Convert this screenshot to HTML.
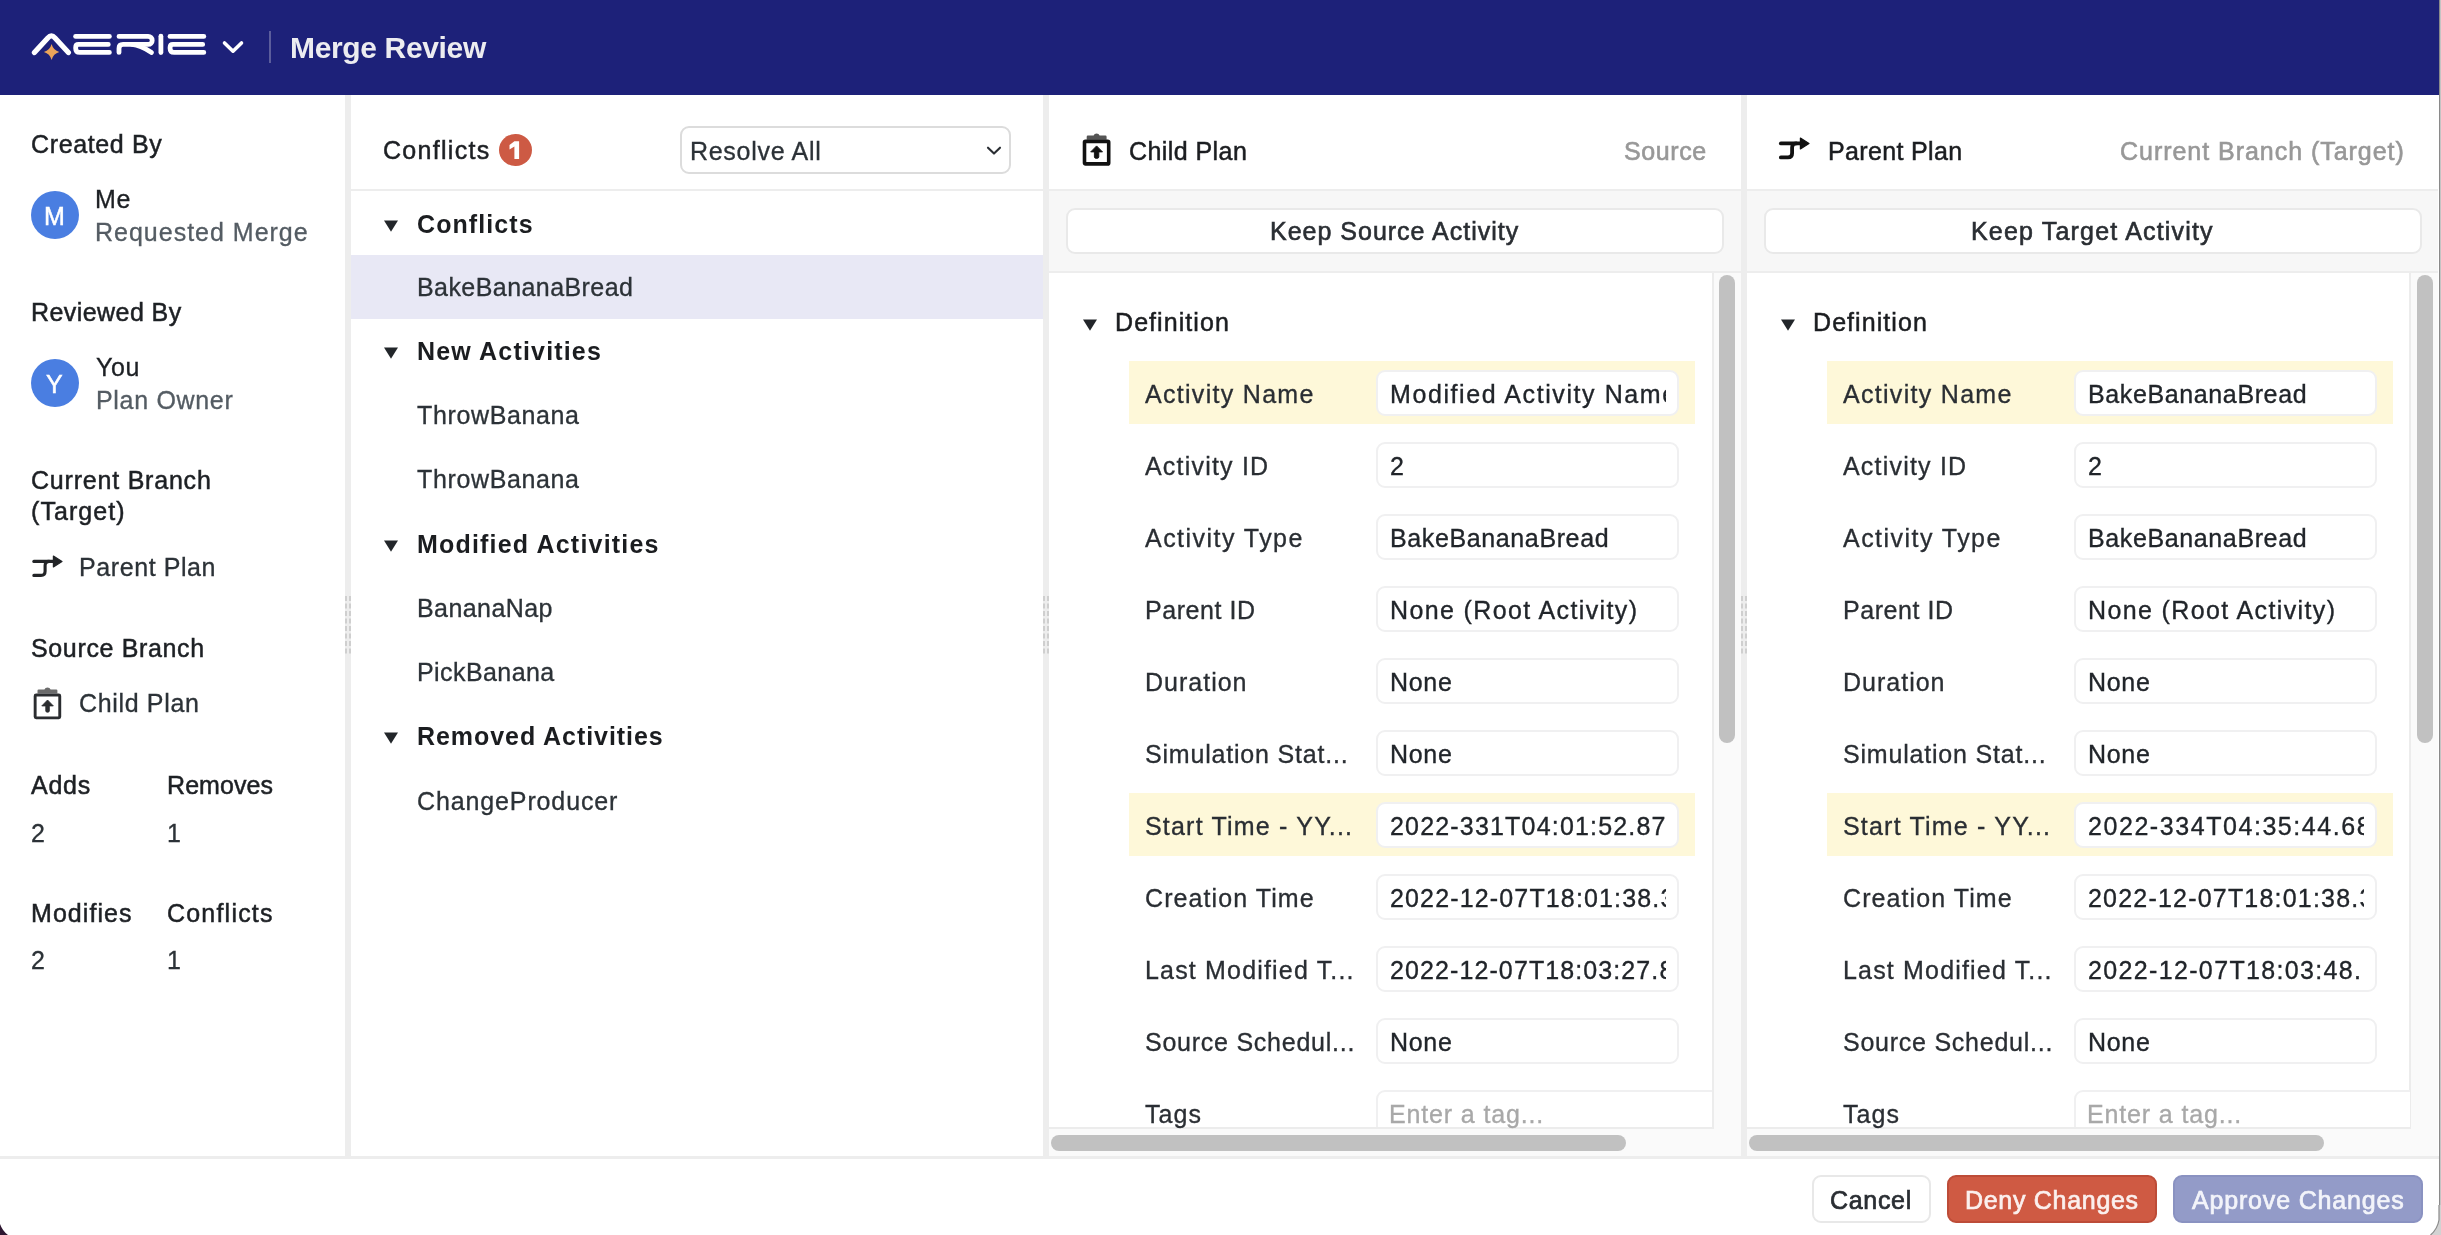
<!DOCTYPE html>
<html><head><meta charset="utf-8"><title>Merge Review</title>
<style>
*{box-sizing:border-box;margin:0;padding:0}
html,body{width:2441px;height:1235px;overflow:hidden;background:#fff;font-family:"Liberation Sans",sans-serif}
.t{position:absolute;white-space:nowrap;will-change:transform}
.b{position:absolute}
</style></head><body>
<div class="b" style="left:0px;top:0px;width:2441px;height:95px;background:#1d2179"></div>
<svg class="b" style="left:0;top:0" width="300" height="95" viewBox="0 0 300 95">
<g fill="none" stroke="#fff" stroke-width="4.8" stroke-linecap="round" stroke-linejoin="round">
<path d="M34.4 52.6 L47.8 37.9 Q51.4 34 55 37.9 L68.4 52.6" stroke-width="5.2"/>
<path d="M75.6 36.4 H109.4"/>
<path d="M108.3 44.4 H78.5 Q75.7 44.4 75.7 47.2 V48.4 Q75.7 52.4 79.7 52.4 H109.4"/>
<path d="M119 36.4 H148.2 A4 4 0 0 1 148.2 44.4 H123 Q119 44.4 119 48.4 V52.4"/>
<path d="M132 44.4 Q140 45 151.5 52.4"/>
<path d="M160.9 36.2 V52.6"/>
<path d="M170 36.4 H203.8"/>
<path d="M202.7 44.4 H172.9 Q170.1 44.4 170.1 47.2 V48.4 Q170.1 52.4 174.1 52.4 H203.8"/>
<path d="M224.5 43 L233 51.2 L241.5 43" stroke-width="3.6"/>
</g>
<path d="M51.6 43.9 Q53.3 50.2 59.3 51.9 Q53.3 53.6 51.6 59.9 Q49.9 53.6 43.9 51.9 Q49.9 50.2 51.6 43.9Z" fill="#eba45a"/>
<rect x="269" y="31" width="2" height="32" fill="#5b5d9c"/>
</svg>
<div class="t" style="left:290.10px;top:32.65px;font-size:30px;line-height:30px;color:#ececf0;letter-spacing:-0.350px;font-weight:bold;">Merge Review</div>
<div class="b" style="left:345px;top:95px;width:6px;height:1062px;background:#ededed"></div>
<div class="b" style="left:1043px;top:95px;width:6px;height:1062px;background:#ededed"></div>
<div class="b" style="left:1741px;top:95px;width:6px;height:1062px;background:#ededed"></div>
<div class="b" style="left:0px;top:1156px;width:2441px;height:3px;background:#ededed"></div>
<div class="t" style="left:31.10px;top:131.74px;font-size:25px;line-height:25px;color:#1d2024;letter-spacing:0.631px;-webkit-text-stroke:0.5px #1d2024;">Created By</div>
<div class="b" style="left:31px;top:191px;width:48px;height:48px;background:#4a7ee1;border-radius:50%"></div>
<div class="t" style="left:44.30px;top:203.54px;font-size:25px;line-height:25px;color:#fff;letter-spacing:-2.475px;-webkit-text-stroke:0.5px #fff;">M</div>
<div class="t" style="left:95.20px;top:187.34px;font-size:25px;line-height:25px;color:#1d2024;letter-spacing:0.600px;-webkit-text-stroke:0.32px #1d2024;">Me</div>
<div class="t" style="left:95.20px;top:220.44px;font-size:25px;line-height:25px;color:#545c63;letter-spacing:0.996px;-webkit-text-stroke:0.32px #545c63;">Requested Merge</div>
<div class="t" style="left:31.10px;top:300.14px;font-size:25px;line-height:25px;color:#1d2024;letter-spacing:0.432px;-webkit-text-stroke:0.5px #1d2024;">Reviewed By</div>
<div class="b" style="left:31px;top:359px;width:48px;height:48px;background:#4a7ee1;border-radius:50%"></div>
<div class="t" style="left:45.50px;top:371.54px;font-size:25px;line-height:25px;color:#fff;letter-spacing:0.600px;-webkit-text-stroke:0.5px #fff;">Y</div>
<div class="t" style="left:95.50px;top:354.74px;font-size:25px;line-height:25px;color:#1d2024;letter-spacing:0.600px;-webkit-text-stroke:0.32px #1d2024;">You</div>
<div class="t" style="left:95.50px;top:387.64px;font-size:25px;line-height:25px;color:#545c63;letter-spacing:0.686px;-webkit-text-stroke:0.32px #545c63;">Plan Owner</div>
<div class="t" style="left:31.10px;top:468.24px;font-size:25px;line-height:25px;color:#1d2024;letter-spacing:0.792px;-webkit-text-stroke:0.5px #1d2024;">Current Branch</div>
<div class="t" style="left:31.10px;top:499.34px;font-size:25px;line-height:25px;color:#1d2024;letter-spacing:1.068px;-webkit-text-stroke:0.5px #1d2024;">(Target)</div>
<svg class="b" style="left:30.5px;top:554.5px" width="34" height="24" viewBox="0 0 34 24">
<path d="M2.85 6.4 H23" stroke="#222427" stroke-width="3.1" stroke-linecap="round" fill="none"/>
<path d="M2.85 20.4 H10 Q14.1 20.4 14.1 16.3 V10.5 Q14.1 6.4 18.2 6.4" stroke="#222427" stroke-width="3.1" stroke-linecap="round" fill="none"/>
<path d="M22.4 1 L31 6.4 L22.4 11.9 Z" fill="#222427" stroke="#222427" stroke-width="1.2" stroke-linejoin="round"/>
</svg>
<div class="t" style="left:79.30px;top:555.24px;font-size:25px;line-height:25px;color:#2c3237;letter-spacing:0.588px;-webkit-text-stroke:0.32px #2c3237;">Parent Plan</div>
<div class="t" style="left:31.30px;top:635.94px;font-size:25px;line-height:25px;color:#1d2024;letter-spacing:0.644px;-webkit-text-stroke:0.5px #1d2024;">Source Branch</div>
<svg class="b" style="left:31.5px;top:686.5px" width="30" height="34" viewBox="0 0 30 34">
<path d="M5.5 6.6 V3.6 Q5.5 2.4 6.7 2.4 H12.4 Q13.2 0.4 15.5 0.4 Q17.8 0.4 18.6 2.4 H24.2 Q25.4 2.4 25.4 3.6 V6.6 Z" fill="#6b6b6b"/>
<rect x="3.15" y="8.05" width="24.6" height="22.8" rx="1" fill="none" stroke="#2b2d30" stroke-width="2.9"/>
<path d="M15.55 13 L21.3 18.9 H17.3 V24 Q17.3 25.2 15.55 25.2 Q13.8 25.2 13.8 24 V18.9 H9.8 Z" fill="#2b2d30" stroke="#2b2d30" stroke-width="0.9" stroke-linejoin="round"/>
</svg>
<div class="t" style="left:79.00px;top:691.34px;font-size:25px;line-height:25px;color:#2c3237;letter-spacing:0.656px;-webkit-text-stroke:0.32px #2c3237;">Child Plan</div>
<div class="t" style="left:31.30px;top:773.24px;font-size:25px;line-height:25px;color:#1d2024;letter-spacing:0.767px;-webkit-text-stroke:0.5px #1d2024;">Adds</div>
<div class="t" style="left:166.60px;top:773.24px;font-size:25px;line-height:25px;color:#1d2024;letter-spacing:0.079px;-webkit-text-stroke:0.5px #1d2024;">Removes</div>
<div class="t" style="left:31.30px;top:821.14px;font-size:25px;line-height:25px;color:#2c3237;letter-spacing:0.600px;-webkit-text-stroke:0.32px #2c3237;">2</div>
<div class="t" style="left:166.60px;top:821.14px;font-size:25px;line-height:25px;color:#2c3237;letter-spacing:0.600px;-webkit-text-stroke:0.32px #2c3237;">1</div>
<div class="t" style="left:31.30px;top:901.34px;font-size:25px;line-height:25px;color:#1d2024;letter-spacing:1.054px;-webkit-text-stroke:0.5px #1d2024;">Modifies</div>
<div class="t" style="left:166.60px;top:901.34px;font-size:25px;line-height:25px;color:#1d2024;letter-spacing:1.203px;-webkit-text-stroke:0.5px #1d2024;">Conflicts</div>
<div class="t" style="left:31.30px;top:948.14px;font-size:25px;line-height:25px;color:#2c3237;letter-spacing:0.600px;-webkit-text-stroke:0.32px #2c3237;">2</div>
<div class="t" style="left:166.60px;top:948.14px;font-size:25px;line-height:25px;color:#2c3237;letter-spacing:0.600px;-webkit-text-stroke:0.32px #2c3237;">1</div>
<div class="t" style="left:382.80px;top:138.34px;font-size:25px;line-height:25px;color:#1d2024;letter-spacing:1.291px;-webkit-text-stroke:0.5px #1d2024;">Conflicts</div>
<div class="b" style="left:499px;top:134px;width:32.5px;height:32px;background:#cd5a44;border-radius:50%"></div>
<svg class="b" style="left:499px;top:134px" width="33" height="32" viewBox="0 0 33 32"><path d="M15.4 7.3 H20.1 V25 H15.4 V12.6 L10.5 15.4 V11 Z" fill="#fff"/></svg>
<div class="b" style="left:680px;top:126px;width:331px;height:48px;border:2px solid #dcdcdc;border-radius:9px;background:#fff"></div>
<div class="t" style="left:690.20px;top:138.94px;font-size:25px;line-height:25px;color:#2c3237;letter-spacing:0.707px;-webkit-text-stroke:0.32px #2c3237;">Resolve All</div>
<svg class="b" style="left:984px;top:143px" width="20" height="14" viewBox="0 0 20 14"><path d="M4 4.7 L10 10.6 L16 4.7" fill="none" stroke="#2a2e33" stroke-width="2.1" stroke-linecap="round" stroke-linejoin="round"/></svg>
<div class="b" style="left:351px;top:189px;width:692px;height:2px;background:#ededed"></div>
<div class="b" style="left:351px;top:255px;width:692px;height:64px;background:#e8e8f5"></div>
<svg class="b" style="left:383px;top:218.6px" width="16" height="14" viewBox="0 0 16 14"><path d="M1 1.5 H15 L8 12.8 Z" fill="#22262a"/></svg>
<div class="t" style="left:416.60px;top:211.64px;font-size:25px;line-height:25px;color:#1b1d20;letter-spacing:1.088px;font-weight:bold;">Conflicts</div>
<div class="t" style="left:416.60px;top:275.34px;font-size:25px;line-height:25px;color:#2c3237;letter-spacing:0.430px;-webkit-text-stroke:0.32px #2c3237;">BakeBananaBread</div>
<svg class="b" style="left:383px;top:346.3px" width="16" height="14" viewBox="0 0 16 14"><path d="M1 1.5 H15 L8 12.8 Z" fill="#22262a"/></svg>
<div class="t" style="left:416.60px;top:339.34px;font-size:25px;line-height:25px;color:#1b1d20;letter-spacing:1.175px;font-weight:bold;">New Activities</div>
<div class="t" style="left:416.60px;top:403.04px;font-size:25px;line-height:25px;color:#2c3237;letter-spacing:0.635px;-webkit-text-stroke:0.32px #2c3237;">ThrowBanana</div>
<div class="t" style="left:416.60px;top:467.04px;font-size:25px;line-height:25px;color:#2c3237;letter-spacing:0.635px;-webkit-text-stroke:0.32px #2c3237;">ThrowBanana</div>
<svg class="b" style="left:383px;top:539.2px" width="16" height="14" viewBox="0 0 16 14"><path d="M1 1.5 H15 L8 12.8 Z" fill="#22262a"/></svg>
<div class="t" style="left:416.60px;top:532.24px;font-size:25px;line-height:25px;color:#1b1d20;letter-spacing:1.194px;font-weight:bold;">Modified Activities</div>
<div class="t" style="left:416.60px;top:596.44px;font-size:25px;line-height:25px;color:#2c3237;letter-spacing:0.425px;-webkit-text-stroke:0.32px #2c3237;">BananaNap</div>
<div class="t" style="left:416.60px;top:660.04px;font-size:25px;line-height:25px;color:#2c3237;letter-spacing:0.422px;-webkit-text-stroke:0.32px #2c3237;">PickBanana</div>
<svg class="b" style="left:383px;top:731.1px" width="16" height="14" viewBox="0 0 16 14"><path d="M1 1.5 H15 L8 12.8 Z" fill="#22262a"/></svg>
<div class="t" style="left:416.60px;top:724.14px;font-size:25px;line-height:25px;color:#1b1d20;letter-spacing:0.944px;font-weight:bold;">Removed Activities</div>
<div class="t" style="left:416.60px;top:788.84px;font-size:25px;line-height:25px;color:#2c3237;letter-spacing:0.877px;-webkit-text-stroke:0.32px #2c3237;">ChangeProducer</div>
<svg class="b" style="left:1081.4px;top:133.2px" width="32" height="34" viewBox="0 0 32 34">
<path d="M5.7 6.8 V3.8 Q5.7 2.6 6.9 2.6 H12.6 Q13.4 0.6 15.6 0.6 Q17.8 0.6 18.6 2.6 H24.4 Q25.6 2.6 25.6 3.8 V6.8 Z" fill="#555"/>
<rect x="3.5" y="8.4" width="24.2" height="22.5" rx="1" fill="none" stroke="#111" stroke-width="3.6"/>
<path d="M15.6 12.9 L21.5 18.9 H17.8 V24 Q17.8 25.4 15.6 25.4 Q13.4 25.4 13.4 24 V18.9 H9.7 Z" fill="#111" stroke="#111" stroke-width="0.9" stroke-linejoin="round"/>
</svg>
<div class="t" style="left:1128.90px;top:138.74px;font-size:25px;line-height:25px;color:#1b1d20;letter-spacing:0.433px;-webkit-text-stroke:0.5px #1b1d20;">Child Plan</div>
<div class="t" style="left:1624.00px;top:138.94px;font-size:25px;line-height:25px;color:#989898;letter-spacing:0.610px;-webkit-text-stroke:0.6px #989898;">Source</div>
<div class="b" style="left:1049px;top:189px;width:692px;height:2px;background:#ededed"></div>
<div class="b" style="left:1049px;top:191px;width:692px;height:80px;background:#f7f7f7"></div>
<div class="b" style="left:1049px;top:271px;width:692px;height:2px;background:#ededed"></div>
<div class="b" style="left:1066px;top:208px;width:658px;height:46px;background:#fff;border:2px solid #e9e9e9;border-radius:9px"></div>
<div class="t" style="left:1269.70px;top:219.14px;font-size:25px;line-height:25px;color:#2a2e33;letter-spacing:0.997px;-webkit-text-stroke:0.6px #2a2e33;">Keep Source Activity</div>
<div class="b" style="left:1711.5px;top:273px;width:29.5px;height:856px;background:#fafafa;border-left:2px solid #ececec"></div>
<div class="b" style="left:1719px;top:275px;width:16px;height:467.5px;background:#c1c1c1;border-radius:8px"></div>
<div class="b" style="left:1049px;top:1127px;width:663px;height:2px;background:#ececec"></div>
<div class="b" style="left:1049px;top:1129px;width:692px;height:27px;background:#fafafa"></div>
<div class="b" style="left:1051px;top:1135px;width:574.5px;height:16px;background:#c1c1c1;border-radius:8px"></div>
<svg class="b" style="left:1081.5px;top:317.5px" width="16" height="14" viewBox="0 0 16 14"><path d="M1 1.5 H15 L8 12.8 Z" fill="#22262a"/></svg>
<div class="t" style="left:1115.10px;top:310.34px;font-size:25px;line-height:25px;color:#1b1d20;letter-spacing:1.072px;-webkit-text-stroke:0.5px #1b1d20;">Definition</div>
<div class="b" style="left:1129px;top:361px;width:566px;height:63px;background:#fef8d9"></div>
<div class="b" style="left:1129px;top:793px;width:566px;height:63px;background:#fef8d9"></div>
<div class="b" style="left:1049px;top:273px;width:663px;height:854px;overflow:hidden">
<div class="b" style="left:326.5px;top:96.69999999999999px;width:303px;height:46.6px;background:#fff;border:2px solid #f0f0f1;border-radius:9px;overflow:hidden"></div>
<div class="b" style="left:326.5px;top:168.7px;width:303px;height:46.6px;background:#fff;border:2px solid #f0f0f1;border-radius:9px;overflow:hidden"></div>
<div class="b" style="left:326.5px;top:240.70000000000005px;width:303px;height:46.6px;background:#fff;border:2px solid #f0f0f1;border-radius:9px;overflow:hidden"></div>
<div class="b" style="left:326.5px;top:312.70000000000005px;width:303px;height:46.6px;background:#fff;border:2px solid #f0f0f1;border-radius:9px;overflow:hidden"></div>
<div class="b" style="left:326.5px;top:384.70000000000005px;width:303px;height:46.6px;background:#fff;border:2px solid #f0f0f1;border-radius:9px;overflow:hidden"></div>
<div class="b" style="left:326.5px;top:456.70000000000005px;width:303px;height:46.6px;background:#fff;border:2px solid #f0f0f1;border-radius:9px;overflow:hidden"></div>
<div class="b" style="left:326.5px;top:528.7px;width:303px;height:46.6px;background:#fff;border:2px solid #f0f0f1;border-radius:9px;overflow:hidden"></div>
<div class="b" style="left:326.5px;top:600.7px;width:303px;height:46.6px;background:#fff;border:2px solid #f0f0f1;border-radius:9px;overflow:hidden"></div>
<div class="b" style="left:326.5px;top:672.7px;width:303px;height:46.6px;background:#fff;border:2px solid #f0f0f1;border-radius:9px;overflow:hidden"></div>
<div class="b" style="left:326.5px;top:744.7px;width:303px;height:46.6px;background:#fff;border:2px solid #f0f0f1;border-radius:9px;overflow:hidden"></div>
<div class="b" style="left:326.5px;top:816.7px;width:400px;height:46.6px;background:#fff;border:2px solid #f0f0f1;border-radius:9px;overflow:hidden"></div>
</div>
<div class="t" style="left:1144.80px;top:381.94px;font-size:25px;line-height:25px;color:#2a2e33;letter-spacing:1.296px;-webkit-text-stroke:0.32px #2a2e33;">Activity Name</div>
<div class="b" style="left:1376px;top:369.7px;width:290px;height:46.6px;overflow:hidden">
<div class="t" style="left:13.70px;top:12.24px;font-size:25px;line-height:25px;color:#21252a;letter-spacing:1.585px;-webkit-text-stroke:0.35px #21252a">Modified Activity Name</div>
</div>
<div class="t" style="left:1144.80px;top:453.94px;font-size:25px;line-height:25px;color:#2a2e33;letter-spacing:1.197px;-webkit-text-stroke:0.32px #2a2e33;">Activity ID</div>
<div class="b" style="left:1376px;top:441.7px;width:290px;height:46.6px;overflow:hidden">
<div class="t" style="left:13.70px;top:12.24px;font-size:25px;line-height:25px;color:#21252a;letter-spacing:0.000px;-webkit-text-stroke:0.35px #21252a">2</div>
</div>
<div class="t" style="left:1144.80px;top:525.94px;font-size:25px;line-height:25px;color:#2a2e33;letter-spacing:1.460px;-webkit-text-stroke:0.32px #2a2e33;">Activity Type</div>
<div class="b" style="left:1376px;top:513.7px;width:290px;height:46.6px;overflow:hidden">
<div class="t" style="left:13.70px;top:12.24px;font-size:25px;line-height:25px;color:#21252a;letter-spacing:0.620px;-webkit-text-stroke:0.35px #21252a">BakeBananaBread</div>
</div>
<div class="t" style="left:1144.80px;top:597.94px;font-size:25px;line-height:25px;color:#2a2e33;letter-spacing:0.547px;-webkit-text-stroke:0.32px #2a2e33;">Parent ID</div>
<div class="b" style="left:1376px;top:585.7px;width:290px;height:46.6px;overflow:hidden">
<div class="t" style="left:13.70px;top:12.24px;font-size:25px;line-height:25px;color:#21252a;letter-spacing:1.375px;-webkit-text-stroke:0.35px #21252a">None (Root Activity)</div>
</div>
<div class="t" style="left:1144.80px;top:669.94px;font-size:25px;line-height:25px;color:#2a2e33;letter-spacing:1.000px;-webkit-text-stroke:0.32px #2a2e33;">Duration</div>
<div class="b" style="left:1376px;top:657.7px;width:290px;height:46.6px;overflow:hidden">
<div class="t" style="left:13.70px;top:12.24px;font-size:25px;line-height:25px;color:#21252a;letter-spacing:0.680px;-webkit-text-stroke:0.35px #21252a">None</div>
</div>
<div class="t" style="left:1144.80px;top:741.94px;font-size:25px;line-height:25px;color:#2a2e33;letter-spacing:0.806px;-webkit-text-stroke:0.32px #2a2e33;">Simulation Stat...</div>
<div class="b" style="left:1376px;top:729.7px;width:290px;height:46.6px;overflow:hidden">
<div class="t" style="left:13.70px;top:12.24px;font-size:25px;line-height:25px;color:#21252a;letter-spacing:0.680px;-webkit-text-stroke:0.35px #21252a">None</div>
</div>
<div class="t" style="left:1144.80px;top:813.94px;font-size:25px;line-height:25px;color:#2a2e33;letter-spacing:1.199px;-webkit-text-stroke:0.32px #2a2e33;">Start Time - YY...</div>
<div class="b" style="left:1376px;top:801.7px;width:290px;height:46.6px;overflow:hidden">
<div class="t" style="left:13.70px;top:12.24px;font-size:25px;line-height:25px;color:#21252a;letter-spacing:1.184px;-webkit-text-stroke:0.35px #21252a">2022-331T04:01:52.877</div>
</div>
<div class="t" style="left:1144.80px;top:885.94px;font-size:25px;line-height:25px;color:#2a2e33;letter-spacing:1.081px;-webkit-text-stroke:0.32px #2a2e33;">Creation Time</div>
<div class="b" style="left:1376px;top:873.7px;width:290px;height:46.6px;overflow:hidden">
<div class="t" style="left:13.70px;top:12.24px;font-size:25px;line-height:25px;color:#21252a;letter-spacing:1.150px;-webkit-text-stroke:0.35px #21252a">2022-12-07T18:01:38.394</div>
</div>
<div class="t" style="left:1144.80px;top:957.94px;font-size:25px;line-height:25px;color:#2a2e33;letter-spacing:1.176px;-webkit-text-stroke:0.32px #2a2e33;">Last Modified T...</div>
<div class="b" style="left:1376px;top:945.7px;width:290px;height:46.6px;overflow:hidden">
<div class="t" style="left:13.70px;top:12.24px;font-size:25px;line-height:25px;color:#21252a;letter-spacing:1.100px;-webkit-text-stroke:0.35px #21252a">2022-12-07T18:03:27.853</div>
</div>
<div class="t" style="left:1144.80px;top:1029.94px;font-size:25px;line-height:25px;color:#2a2e33;letter-spacing:0.752px;-webkit-text-stroke:0.32px #2a2e33;">Source Schedul...</div>
<div class="b" style="left:1376px;top:1017.7px;width:290px;height:46.6px;overflow:hidden">
<div class="t" style="left:13.70px;top:12.24px;font-size:25px;line-height:25px;color:#21252a;letter-spacing:0.680px;-webkit-text-stroke:0.35px #21252a">None</div>
</div>
<div class="t" style="left:1144.80px;top:1101.94px;font-size:25px;line-height:25px;color:#2a2e33;letter-spacing:1.083px;-webkit-text-stroke:0.32px #2a2e33;">Tags</div>
<div class="t" style="left:1388.70px;top:1101.94px;font-size:25px;line-height:25px;color:#a8a8a8;letter-spacing:0.860px;-webkit-text-stroke:0.32px #a8a8a8;">Enter a tag...</div>
<svg class="b" style="left:1777.8px;top:137.2px" width="34" height="24" viewBox="0 0 34 24">
<path d="M2.85 6.4 H23" stroke="#111" stroke-width="3.8" stroke-linecap="round" fill="none"/>
<path d="M2.85 20.4 H10 Q14.1 20.4 14.1 16.3 V10.5 Q14.1 6.4 18.2 6.4" stroke="#111" stroke-width="3.8" stroke-linecap="round" fill="none"/>
<path d="M22.4 1 L31 6.4 L22.4 11.9 Z" fill="#111" stroke="#111" stroke-width="1.2" stroke-linejoin="round"/>
</svg>
<div class="t" style="left:1827.70px;top:138.74px;font-size:25px;line-height:25px;color:#1b1d20;letter-spacing:0.347px;-webkit-text-stroke:0.5px #1b1d20;">Parent Plan</div>
<div class="t" style="left:2119.80px;top:138.94px;font-size:25px;line-height:25px;color:#989898;letter-spacing:0.963px;-webkit-text-stroke:0.6px #989898;">Current Branch (Target)</div>
<div class="b" style="left:1747px;top:189px;width:691px;height:2px;background:#ededed"></div>
<div class="b" style="left:1747px;top:191px;width:691px;height:80px;background:#f7f7f7"></div>
<div class="b" style="left:1747px;top:271px;width:691px;height:2px;background:#ededed"></div>
<div class="b" style="left:1764px;top:208px;width:658px;height:46px;background:#fff;border:2px solid #e9e9e9;border-radius:9px"></div>
<div class="t" style="left:1970.60px;top:219.14px;font-size:25px;line-height:25px;color:#2a2e33;letter-spacing:1.183px;-webkit-text-stroke:0.6px #2a2e33;">Keep Target Activity</div>
<div class="b" style="left:2409px;top:273px;width:29px;height:856px;background:#fafafa;border-left:2px solid #ececec"></div>
<div class="b" style="left:2417px;top:275px;width:16px;height:467.5px;background:#c1c1c1;border-radius:8px"></div>
<div class="b" style="left:1747px;top:1127px;width:663px;height:2px;background:#ececec"></div>
<div class="b" style="left:1747px;top:1129px;width:691px;height:27px;background:#fafafa"></div>
<div class="b" style="left:1749px;top:1135px;width:575px;height:16px;background:#c1c1c1;border-radius:8px"></div>
<svg class="b" style="left:1779.5px;top:317.5px" width="16" height="14" viewBox="0 0 16 14"><path d="M1 1.5 H15 L8 12.8 Z" fill="#22262a"/></svg>
<div class="t" style="left:1813.10px;top:310.34px;font-size:25px;line-height:25px;color:#1b1d20;letter-spacing:1.072px;-webkit-text-stroke:0.5px #1b1d20;">Definition</div>
<div class="b" style="left:1827px;top:361px;width:566px;height:63px;background:#fef8d9"></div>
<div class="b" style="left:1827px;top:793px;width:566px;height:63px;background:#fef8d9"></div>
<div class="b" style="left:1747px;top:273px;width:663px;height:854px;overflow:hidden">
<div class="b" style="left:326.5px;top:96.69999999999999px;width:303px;height:46.6px;background:#fff;border:2px solid #f0f0f1;border-radius:9px;overflow:hidden"></div>
<div class="b" style="left:326.5px;top:168.7px;width:303px;height:46.6px;background:#fff;border:2px solid #f0f0f1;border-radius:9px;overflow:hidden"></div>
<div class="b" style="left:326.5px;top:240.70000000000005px;width:303px;height:46.6px;background:#fff;border:2px solid #f0f0f1;border-radius:9px;overflow:hidden"></div>
<div class="b" style="left:326.5px;top:312.70000000000005px;width:303px;height:46.6px;background:#fff;border:2px solid #f0f0f1;border-radius:9px;overflow:hidden"></div>
<div class="b" style="left:326.5px;top:384.70000000000005px;width:303px;height:46.6px;background:#fff;border:2px solid #f0f0f1;border-radius:9px;overflow:hidden"></div>
<div class="b" style="left:326.5px;top:456.70000000000005px;width:303px;height:46.6px;background:#fff;border:2px solid #f0f0f1;border-radius:9px;overflow:hidden"></div>
<div class="b" style="left:326.5px;top:528.7px;width:303px;height:46.6px;background:#fff;border:2px solid #f0f0f1;border-radius:9px;overflow:hidden"></div>
<div class="b" style="left:326.5px;top:600.7px;width:303px;height:46.6px;background:#fff;border:2px solid #f0f0f1;border-radius:9px;overflow:hidden"></div>
<div class="b" style="left:326.5px;top:672.7px;width:303px;height:46.6px;background:#fff;border:2px solid #f0f0f1;border-radius:9px;overflow:hidden"></div>
<div class="b" style="left:326.5px;top:744.7px;width:303px;height:46.6px;background:#fff;border:2px solid #f0f0f1;border-radius:9px;overflow:hidden"></div>
<div class="b" style="left:326.5px;top:816.7px;width:400px;height:46.6px;background:#fff;border:2px solid #f0f0f1;border-radius:9px;overflow:hidden"></div>
</div>
<div class="t" style="left:1842.80px;top:381.94px;font-size:25px;line-height:25px;color:#2a2e33;letter-spacing:1.296px;-webkit-text-stroke:0.32px #2a2e33;">Activity Name</div>
<div class="b" style="left:2074px;top:369.7px;width:290px;height:46.6px;overflow:hidden">
<div class="t" style="left:13.70px;top:12.24px;font-size:25px;line-height:25px;color:#21252a;letter-spacing:0.620px;-webkit-text-stroke:0.35px #21252a">BakeBananaBread</div>
</div>
<div class="t" style="left:1842.80px;top:453.94px;font-size:25px;line-height:25px;color:#2a2e33;letter-spacing:1.197px;-webkit-text-stroke:0.32px #2a2e33;">Activity ID</div>
<div class="b" style="left:2074px;top:441.7px;width:290px;height:46.6px;overflow:hidden">
<div class="t" style="left:13.70px;top:12.24px;font-size:25px;line-height:25px;color:#21252a;letter-spacing:0.000px;-webkit-text-stroke:0.35px #21252a">2</div>
</div>
<div class="t" style="left:1842.80px;top:525.94px;font-size:25px;line-height:25px;color:#2a2e33;letter-spacing:1.460px;-webkit-text-stroke:0.32px #2a2e33;">Activity Type</div>
<div class="b" style="left:2074px;top:513.7px;width:290px;height:46.6px;overflow:hidden">
<div class="t" style="left:13.70px;top:12.24px;font-size:25px;line-height:25px;color:#21252a;letter-spacing:0.620px;-webkit-text-stroke:0.35px #21252a">BakeBananaBread</div>
</div>
<div class="t" style="left:1842.80px;top:597.94px;font-size:25px;line-height:25px;color:#2a2e33;letter-spacing:0.547px;-webkit-text-stroke:0.32px #2a2e33;">Parent ID</div>
<div class="b" style="left:2074px;top:585.7px;width:290px;height:46.6px;overflow:hidden">
<div class="t" style="left:13.70px;top:12.24px;font-size:25px;line-height:25px;color:#21252a;letter-spacing:1.375px;-webkit-text-stroke:0.35px #21252a">None (Root Activity)</div>
</div>
<div class="t" style="left:1842.80px;top:669.94px;font-size:25px;line-height:25px;color:#2a2e33;letter-spacing:1.000px;-webkit-text-stroke:0.32px #2a2e33;">Duration</div>
<div class="b" style="left:2074px;top:657.7px;width:290px;height:46.6px;overflow:hidden">
<div class="t" style="left:13.70px;top:12.24px;font-size:25px;line-height:25px;color:#21252a;letter-spacing:0.680px;-webkit-text-stroke:0.35px #21252a">None</div>
</div>
<div class="t" style="left:1842.80px;top:741.94px;font-size:25px;line-height:25px;color:#2a2e33;letter-spacing:0.806px;-webkit-text-stroke:0.32px #2a2e33;">Simulation Stat...</div>
<div class="b" style="left:2074px;top:729.7px;width:290px;height:46.6px;overflow:hidden">
<div class="t" style="left:13.70px;top:12.24px;font-size:25px;line-height:25px;color:#21252a;letter-spacing:0.680px;-webkit-text-stroke:0.35px #21252a">None</div>
</div>
<div class="t" style="left:1842.80px;top:813.94px;font-size:25px;line-height:25px;color:#2a2e33;letter-spacing:1.199px;-webkit-text-stroke:0.32px #2a2e33;">Start Time - YY...</div>
<div class="b" style="left:2074px;top:801.7px;width:290px;height:46.6px;overflow:hidden">
<div class="t" style="left:13.70px;top:12.24px;font-size:25px;line-height:25px;color:#21252a;letter-spacing:1.560px;-webkit-text-stroke:0.35px #21252a">2022-334T04:35:44.683</div>
</div>
<div class="t" style="left:1842.80px;top:885.94px;font-size:25px;line-height:25px;color:#2a2e33;letter-spacing:1.081px;-webkit-text-stroke:0.32px #2a2e33;">Creation Time</div>
<div class="b" style="left:2074px;top:873.7px;width:290px;height:46.6px;overflow:hidden">
<div class="t" style="left:13.70px;top:12.24px;font-size:25px;line-height:25px;color:#21252a;letter-spacing:1.200px;-webkit-text-stroke:0.35px #21252a">2022-12-07T18:01:38.394</div>
</div>
<div class="t" style="left:1842.80px;top:957.94px;font-size:25px;line-height:25px;color:#2a2e33;letter-spacing:1.176px;-webkit-text-stroke:0.32px #2a2e33;">Last Modified T...</div>
<div class="b" style="left:2074px;top:945.7px;width:290px;height:46.6px;overflow:hidden">
<div class="t" style="left:13.70px;top:12.24px;font-size:25px;line-height:25px;color:#21252a;letter-spacing:1.350px;-webkit-text-stroke:0.35px #21252a">2022-12-07T18:03:48.123</div>
</div>
<div class="t" style="left:1842.80px;top:1029.94px;font-size:25px;line-height:25px;color:#2a2e33;letter-spacing:0.752px;-webkit-text-stroke:0.32px #2a2e33;">Source Schedul...</div>
<div class="b" style="left:2074px;top:1017.7px;width:290px;height:46.6px;overflow:hidden">
<div class="t" style="left:13.70px;top:12.24px;font-size:25px;line-height:25px;color:#21252a;letter-spacing:0.680px;-webkit-text-stroke:0.35px #21252a">None</div>
</div>
<div class="t" style="left:1842.80px;top:1101.94px;font-size:25px;line-height:25px;color:#2a2e33;letter-spacing:1.083px;-webkit-text-stroke:0.32px #2a2e33;">Tags</div>
<div class="t" style="left:2086.70px;top:1101.94px;font-size:25px;line-height:25px;color:#a8a8a8;letter-spacing:0.860px;-webkit-text-stroke:0.32px #a8a8a8;">Enter a tag...</div>
<div class="b" style="left:1812px;top:1175px;width:119px;height:48px;background:#fff;border:2px solid #e8e8e8;border-radius:9px"></div>
<div class="t" style="left:1829.70px;top:1188.04px;font-size:25px;line-height:25px;color:#2a2e33;letter-spacing:0.685px;-webkit-text-stroke:0.7px #2a2e33;">Cancel</div>
<div class="b" style="left:1947px;top:1175px;width:210px;height:48px;background:#cf5a43;border:2px solid #bd4c38;border-radius:9px"></div>
<div class="t" style="left:1964.70px;top:1188.04px;font-size:25px;line-height:25px;color:#fbf0ee;letter-spacing:0.702px;-webkit-text-stroke:0.7px #fbf0ee;">Deny Changes</div>
<div class="b" style="left:2173px;top:1175px;width:250px;height:48px;background:#939bc8;border:2px solid #8a92c1;border-radius:9px"></div>
<div class="t" style="left:2192.00px;top:1188.04px;font-size:25px;line-height:25px;color:#f3f4fa;letter-spacing:0.827px;-webkit-text-stroke:0.7px #f3f4fa;">Approve Changes</div>
<div class="b" style="left:2439px;top:0px;width:2px;height:1235px;background:#c4c4c4;border-left:1px solid #8a8a8a"></div>
<svg class="b" style="left:345px;top:596px" width="6" height="60" viewBox="0 0 6 60"><rect x="0" y="0.0" width="2" height="5" fill="#cfcfcf"/><rect x="4" y="0.0" width="2" height="5" fill="#cfcfcf"/><rect x="0" y="7.5" width="2" height="5" fill="#cfcfcf"/><rect x="4" y="7.5" width="2" height="5" fill="#cfcfcf"/><rect x="0" y="15.0" width="2" height="5" fill="#cfcfcf"/><rect x="4" y="15.0" width="2" height="5" fill="#cfcfcf"/><rect x="0" y="22.5" width="2" height="5" fill="#cfcfcf"/><rect x="4" y="22.5" width="2" height="5" fill="#cfcfcf"/><rect x="0" y="30.0" width="2" height="5" fill="#cfcfcf"/><rect x="4" y="30.0" width="2" height="5" fill="#cfcfcf"/><rect x="0" y="37.5" width="2" height="5" fill="#cfcfcf"/><rect x="4" y="37.5" width="2" height="5" fill="#cfcfcf"/><rect x="0" y="45.0" width="2" height="5" fill="#cfcfcf"/><rect x="4" y="45.0" width="2" height="5" fill="#cfcfcf"/><rect x="0" y="52.5" width="2" height="5" fill="#cfcfcf"/><rect x="4" y="52.5" width="2" height="5" fill="#cfcfcf"/></svg>
<svg class="b" style="left:1043px;top:596px" width="6" height="60" viewBox="0 0 6 60"><rect x="0" y="0.0" width="2" height="5" fill="#cfcfcf"/><rect x="4" y="0.0" width="2" height="5" fill="#cfcfcf"/><rect x="0" y="7.5" width="2" height="5" fill="#cfcfcf"/><rect x="4" y="7.5" width="2" height="5" fill="#cfcfcf"/><rect x="0" y="15.0" width="2" height="5" fill="#cfcfcf"/><rect x="4" y="15.0" width="2" height="5" fill="#cfcfcf"/><rect x="0" y="22.5" width="2" height="5" fill="#cfcfcf"/><rect x="4" y="22.5" width="2" height="5" fill="#cfcfcf"/><rect x="0" y="30.0" width="2" height="5" fill="#cfcfcf"/><rect x="4" y="30.0" width="2" height="5" fill="#cfcfcf"/><rect x="0" y="37.5" width="2" height="5" fill="#cfcfcf"/><rect x="4" y="37.5" width="2" height="5" fill="#cfcfcf"/><rect x="0" y="45.0" width="2" height="5" fill="#cfcfcf"/><rect x="4" y="45.0" width="2" height="5" fill="#cfcfcf"/><rect x="0" y="52.5" width="2" height="5" fill="#cfcfcf"/><rect x="4" y="52.5" width="2" height="5" fill="#cfcfcf"/></svg>
<svg class="b" style="left:1741px;top:596px" width="6" height="60" viewBox="0 0 6 60"><rect x="0" y="0.0" width="2" height="5" fill="#cfcfcf"/><rect x="4" y="0.0" width="2" height="5" fill="#cfcfcf"/><rect x="0" y="7.5" width="2" height="5" fill="#cfcfcf"/><rect x="4" y="7.5" width="2" height="5" fill="#cfcfcf"/><rect x="0" y="15.0" width="2" height="5" fill="#cfcfcf"/><rect x="4" y="15.0" width="2" height="5" fill="#cfcfcf"/><rect x="0" y="22.5" width="2" height="5" fill="#cfcfcf"/><rect x="4" y="22.5" width="2" height="5" fill="#cfcfcf"/><rect x="0" y="30.0" width="2" height="5" fill="#cfcfcf"/><rect x="4" y="30.0" width="2" height="5" fill="#cfcfcf"/><rect x="0" y="37.5" width="2" height="5" fill="#cfcfcf"/><rect x="4" y="37.5" width="2" height="5" fill="#cfcfcf"/><rect x="0" y="45.0" width="2" height="5" fill="#cfcfcf"/><rect x="4" y="45.0" width="2" height="5" fill="#cfcfcf"/><rect x="0" y="52.5" width="2" height="5" fill="#cfcfcf"/><rect x="4" y="52.5" width="2" height="5" fill="#cfcfcf"/></svg>
<svg class="b" style="left:0;top:1205px" width="30" height="30" viewBox="0 0 30 30"><path d="M0 19 Q2.5 26 8 30 H0 Z" fill="#2e1731"/></svg>
<svg class="b" style="left:2411px;top:1205px" width="30" height="30" viewBox="0 0 30 30"><path d="M30 0 V30 H19.5 Q26.5 24 28 15 V0 Z" fill="#d2d2d2"/><path d="M28 0 V15 Q26.5 24 19.5 30" fill="none" stroke="#8a8a8a" stroke-width="1.2"/></svg>
</body></html>
